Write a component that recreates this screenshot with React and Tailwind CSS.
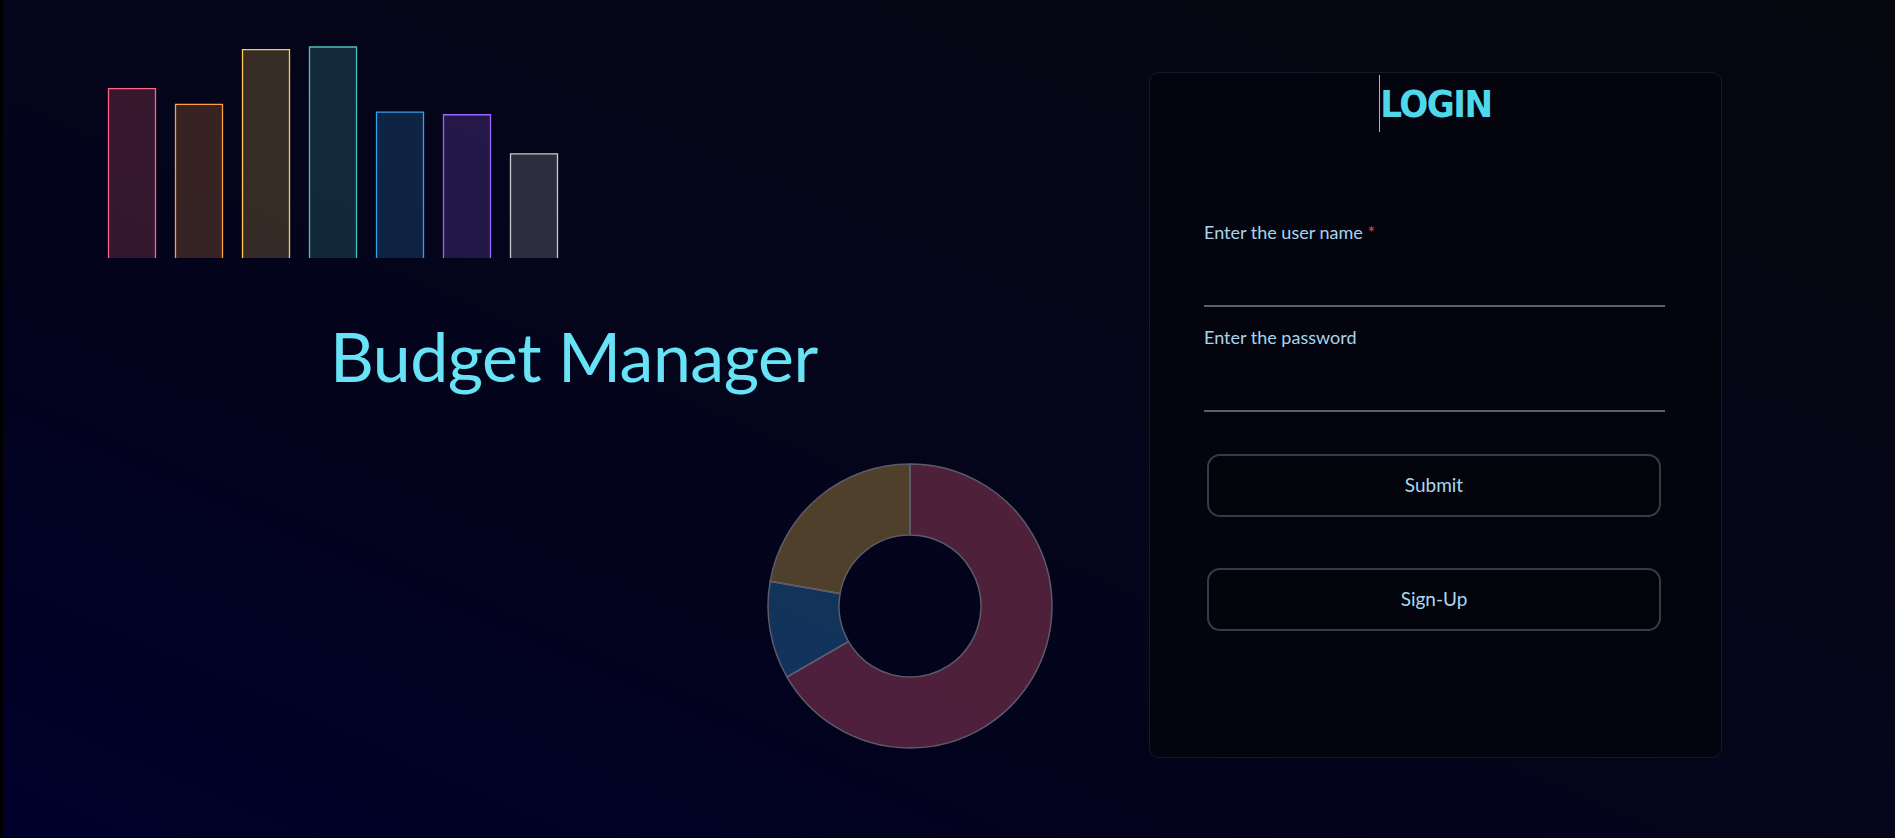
import React from "react";

const bars = [
  { v: 65, stroke: "rgb(255,99,132)", fill: "rgba(255,99,132,0.2)" },
  { v: 59, stroke: "rgb(255,159,64)", fill: "rgba(255,159,64,0.2)" },
  { v: 80, stroke: "rgb(255,205,86)", fill: "rgba(255,205,86,0.2)" },
  { v: 81, stroke: "rgb(75,192,192)", fill: "rgba(75,192,192,0.2)" },
  { v: 56, stroke: "rgb(54,162,235)", fill: "rgba(54,162,235,0.2)" },
  { v: 55, stroke: "rgb(153,102,255)", fill: "rgba(153,102,255,0.2)" },
  { v: 40, stroke: "rgb(201,203,207)", fill: "rgba(201,203,207,0.2)" },
];

function BarChart() {
  const base = 218;
  return (
    <svg width="470" height="220" className="ml-[97px] mt-[40px] shrink-0">
      {bars.map((b, i) => {
        const x = 8.5 + i * 67;
        const top = base - b.v * 2.605;
        return (
          <g key={i}>
            <rect x={x} y={top} width="47" height={base - top} fill={b.fill} />
            <path
              d={`M${x} ${base} V${top} H${x + 47} V${base}`}
              fill="none"
              stroke={b.stroke}
              strokeWidth="1.3"
            />
          </g>
        );
      })}
    </svg>
  );
}

const slices = [
  { v: 300, fill: "rgba(255,99,132,0.3)" },
  { v: 50, fill: "rgba(54,162,235,0.3)" },
  { v: 100, fill: "rgba(255,205,86,0.3)" },
];

function arc(cx, cy, R, r, a0, a1) {
  const p = (rad, a) => [cx + rad * Math.sin(a), cy - rad * Math.cos(a)];
  const large = a1 - a0 > Math.PI ? 1 : 0;
  const [x0, y0] = p(R, a0);
  const [x1, y1] = p(R, a1);
  const [x2, y2] = p(r, a1);
  const [x3, y3] = p(r, a0);
  return `M${x0} ${y0} A${R} ${R} 0 ${large} 1 ${x1} ${y1} L${x2} ${y2} A${r} ${r} 0 ${large} 0 ${x3} ${y3} Z`;
}

function Donut() {
  const total = slices.reduce((s, x) => s + x.v, 0);
  let a = 0;
  return (
    <svg width="290" height="290" className="ml-[762px] mt-[71px] shrink-0">
      {slices.map((s, i) => {
        const a0 = a;
        a += (s.v / total) * Math.PI * 2;
        return (
          <path
            key={i}
            d={arc(145, 145, 142, 71, a0, a)}
            fill={s.fill}
            stroke="#5b5b6b"
            strokeWidth="1.5"
          />
        );
      })}
    </svg>
  );
}

export default function App() {
  return (
    <div className="h-[838px] w-full flex overflow-hidden border-l-[3px] border-black bg-[linear-gradient(to_top_right,#00002c_0%,#03031c_35%,#05051a_55%,#07070f_100%)] font-['Lato',sans-serif]">
      <div className="w-[1146px] shrink-0 flex flex-col">
        <BarChart />
        <h1 className="ml-[327px] mt-[62px] text-[68px] leading-none font-normal tracking-[-0.5px] text-[#67e3f5] whitespace-nowrap">
          Budget Manager
        </h1>
        <Donut />
      </div>

      <div className="mt-[72px] w-[573px] h-[686px] shrink-0 rounded-[10px] border border-[#141b2a] bg-[#04040f] flex flex-col">
        <div className="mt-[2px] flex justify-center">
          <span className="h-[57px] border-l border-[#4fd8ea] pt-[5px] text-[38px] leading-[48px] font-bold tracking-[-1.5px] text-[#4fd8ea] font-['Liberation_Sans_Narrow','DejaVu_Sans_Condensed',sans-serif]">
            LOGIN
          </span>
        </div>

        <div className="px-[54px] flex flex-col">
          <label className="mt-[90px] text-[18px] leading-[20px] text-[#a9d4ea]">
            Enter the user name <span className="text-[#e04848]">*</span>
          </label>
          <div className="mt-[63px] h-[2px] w-[461px] bg-[#5f5f66]" />

          <label className="mt-[20px] text-[18px] leading-[20px] text-[#a9d4ea]">
            Enter the password
          </label>
          <div className="mt-[63px] h-[2px] w-[461px] bg-[#5f5f66]" />

          <button className="mt-[42px] ml-[3px] w-[454px] h-[63px] rounded-[13px] border-2 border-[#3a3a44] bg-[#03030c] text-[19px] text-[#a8d8f0]">
            Submit
          </button>
          <button className="mt-[51px] ml-[3px] w-[454px] h-[63px] rounded-[13px] border-2 border-[#3a3a44] bg-[#03030c] text-[19px] text-[#a8d8f0]">
            Sign-Up
          </button>
        </div>
      </div>
    </div>
  );
}
